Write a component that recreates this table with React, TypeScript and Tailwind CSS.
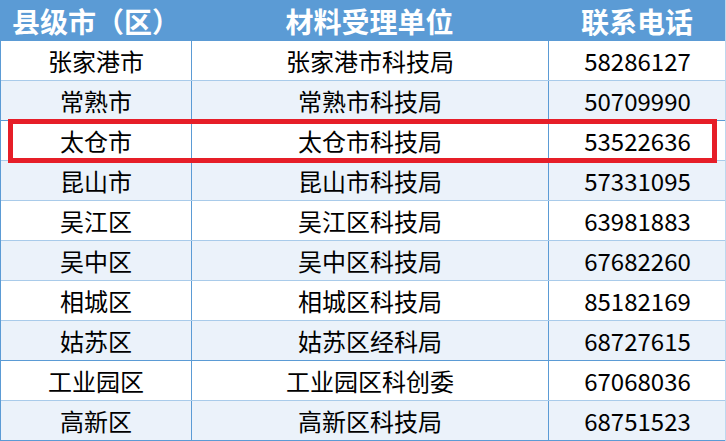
import React from "react";

const rows: [string, string, string][] = [
  ["张家港市", "张家港市科技局", "58286127"],
  ["常熟市", "常熟市科技局", "50709990"],
  ["太仓市", "太仓市科技局", "53522636"],
  ["昆山市", "昆山市科技局", "57331095"],
  ["吴江区", "吴江区科技局", "63981883"],
  ["吴中区", "吴中区科技局", "67682260"],
  ["相城区", "相城区科技局", "85182169"],
  ["姑苏区", "姑苏区经科局", "68727615"],
  ["工业园区", "工业园区科创委", "67068036"],
  ["高新区", "高新区科技局", "68751523"],
];

export default function App() {
  return (
    <div
      className="relative w-[726px] h-[441px] bg-white overflow-hidden"
      style={{ fontFamily: '"Noto Sans CJK SC", "Noto Sans", sans-serif' }}
    >
      <div className="border-l border-[#5b9bd5] border-r border-r-[#bdd7ee]">
        <div className="grid grid-cols-[190px_357px_178px] h-[41px] bg-[#5b9bd5] text-white font-bold text-[28px] leading-none">
          <div className="flex items-center justify-center">县级市（区）</div>
          <div className="flex items-center justify-center">材料受理单位</div>
          <div className="flex items-center justify-center">联系电话</div>
        </div>
        {rows.map((r, i) => (
          <div
            key={i}
            className={
              "grid grid-cols-[190px_357px_178px] h-[40px] border-b text-[24px] leading-none text-black " +
              (i % 2 === 1 ? "bg-[#ebf2fa] " : "bg-white ") +
              (i === 1 || i === 7 || i === 9 ? "border-[#5b9bd5]" : "border-[#a9cbea]")
            }
          >
            <div className="flex items-center justify-center">{r[0]}</div>
            <div className="flex items-center justify-center border-l border-[#5b9bd5]">{r[1]}</div>
            <div className="flex items-center justify-center border-l border-[#5b9bd5]">{r[2]}</div>
          </div>
        ))}
      </div>
      <div className="absolute left-[8px] top-[119px] w-[709px] h-[44px] border-[5px] border-[#e61e28]" />
    </div>
  );
}
